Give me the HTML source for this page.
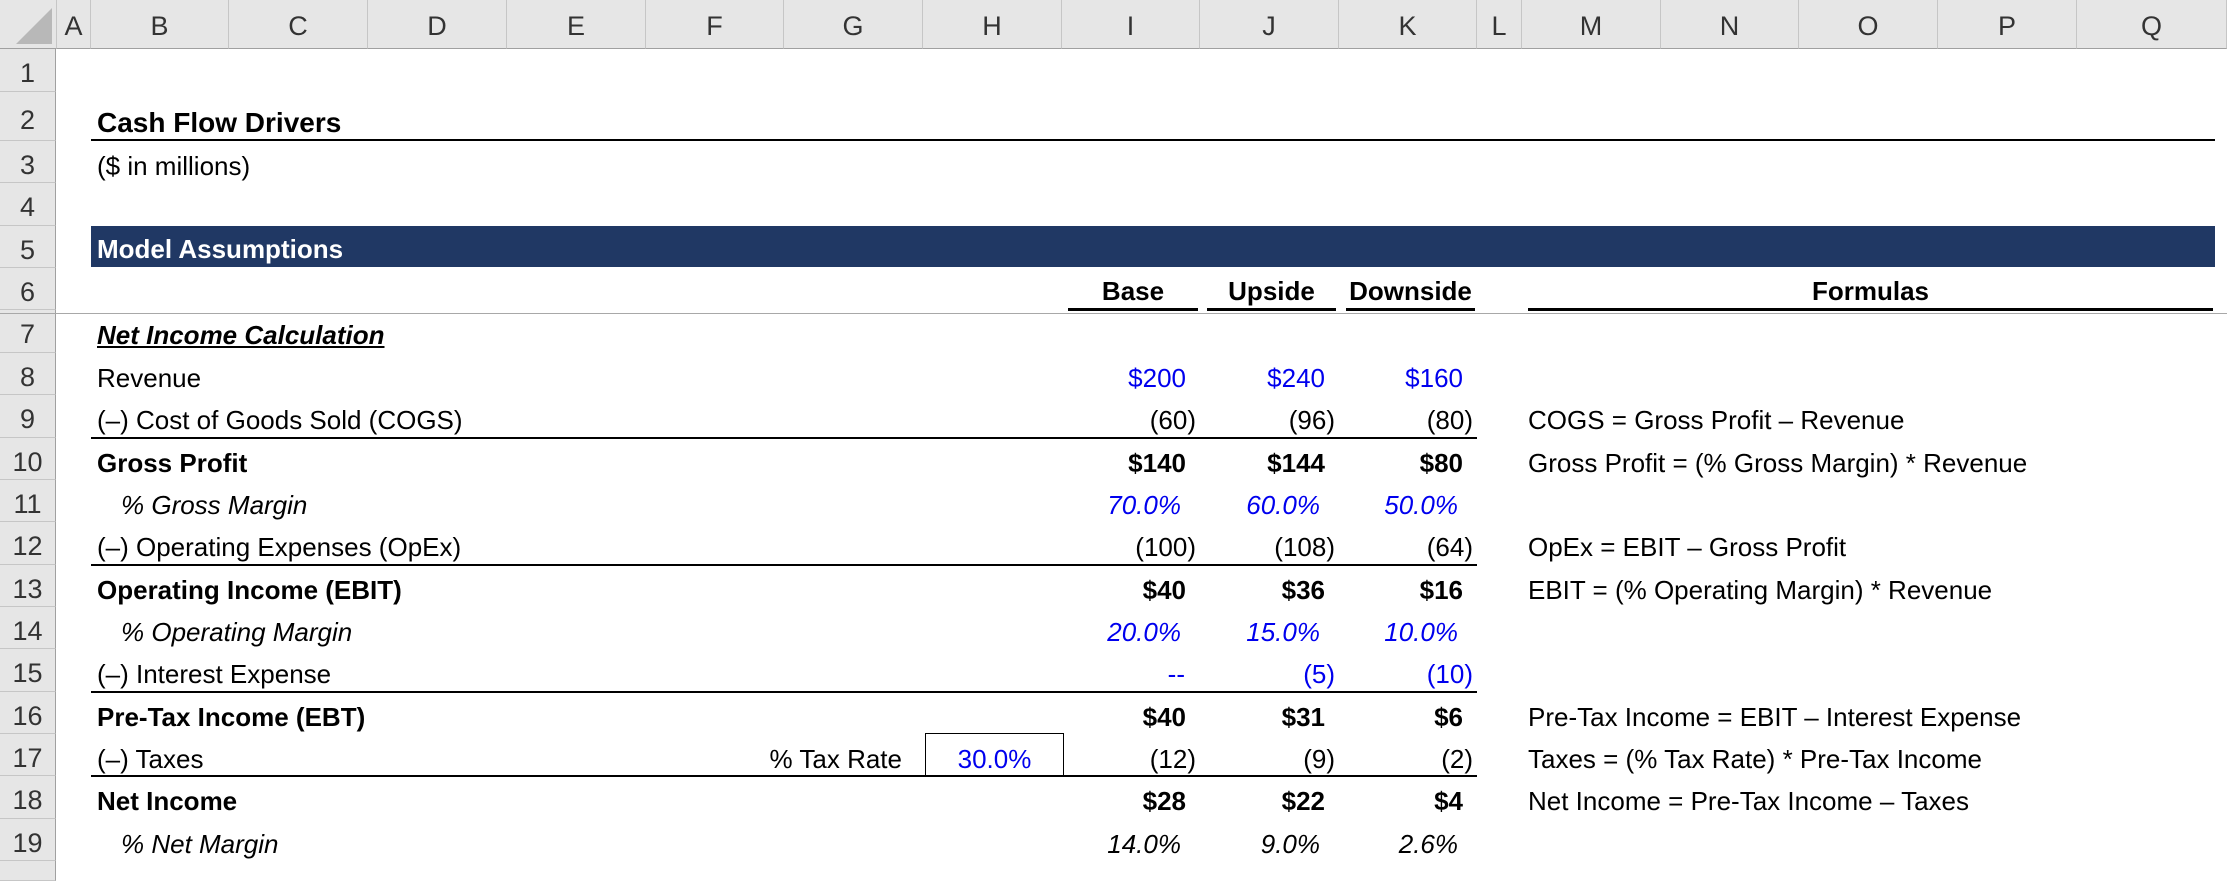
<!DOCTYPE html>
<html><head><meta charset="utf-8"><style>
*{margin:0;padding:0;box-sizing:border-box}
body{width:2227px;height:867px;background:#fff;position:relative;overflow:hidden;font-family:"Liberation Sans",sans-serif;font-size:26px;color:#000}
.a{position:absolute;white-space:nowrap;height:42px;line-height:50px}
.hd{position:absolute;top:0;height:49px;background:#e6e6e6;border-right:1px solid #c6c6c6;border-bottom:1px solid #a0a0a0;text-align:center;line-height:52px;color:#333;font-size:27px}
.rh{position:absolute;left:0;width:56px;background:#e6e6e6;border-bottom:1px solid #c6c6c6;border-right:1px solid #a0a0a0;text-align:center;color:#333;font-size:27px}
.b{font-weight:bold}.i{font-style:italic}.bl{color:#0000ee}
.r{text-align:right}.c{text-align:center}
.hl{position:absolute;height:2px;background:#000}
</style></head><body>
<!-- column headers -->
<div class="hd" style="left:0;width:57px"><svg width="57" height="49" style="position:absolute;left:0;top:0"><polygon points="52,8 52,44 16,44" fill="#b8b8b8"/></svg></div>
<div class="hd" style="left:57px;width:34px">A</div>
<div class="hd" style="left:91px;width:138px">B</div>
<div class="hd" style="left:229px;width:139px">C</div>
<div class="hd" style="left:368px;width:139px">D</div>
<div class="hd" style="left:507px;width:139px">E</div>
<div class="hd" style="left:646px;width:138px">F</div>
<div class="hd" style="left:784px;width:139px">G</div>
<div class="hd" style="left:923px;width:139px">H</div>
<div class="hd" style="left:1062px;width:138px">I</div>
<div class="hd" style="left:1200px;width:139px">J</div>
<div class="hd" style="left:1339px;width:138px">K</div>
<div class="hd" style="left:1477px;width:45px">L</div>
<div class="hd" style="left:1522px;width:139px">M</div>
<div class="hd" style="left:1661px;width:138px">N</div>
<div class="hd" style="left:1799px;width:139px">O</div>
<div class="hd" style="left:1938px;width:139px">P</div>
<div class="hd" style="left:2077px;width:150px">Q</div>
<!-- row headers -->
<div class="rh" style="top:49px;height:43px;line-height:48px">1</div>
<div class="rh" style="top:92px;height:49px;line-height:56px">2</div>
<div class="rh" style="top:141px;height:42px;line-height:48px">3</div>
<div class="rh" style="top:183px;height:43px;line-height:48px">4</div>
<div class="rh" style="top:226px;height:42px;line-height:48px">5</div>
<div class="rh" style="top:268px;height:42px;line-height:48px">6</div>
<div class="rh" style="top:310px;height:43px;line-height:48px">7</div>
<div class="rh" style="top:353px;height:42px;line-height:48px">8</div>
<div class="rh" style="top:395px;height:43px;line-height:48px">9</div>
<div class="rh" style="top:438px;height:42px;line-height:48px">10</div>
<div class="rh" style="top:480px;height:42px;line-height:48px">11</div>
<div class="rh" style="top:522px;height:43px;line-height:48px">12</div>
<div class="rh" style="top:565px;height:42px;line-height:48px">13</div>
<div class="rh" style="top:607px;height:42px;line-height:48px">14</div>
<div class="rh" style="top:649px;height:43px;line-height:48px">15</div>
<div class="rh" style="top:692px;height:42px;line-height:48px">16</div>
<div class="rh" style="top:734px;height:42px;line-height:48px">17</div>
<div class="rh" style="top:776px;height:43px;line-height:48px">18</div>
<div class="rh" style="top:819px;height:42px;line-height:48px">19</div>
<div class="rh" style="top:861px;height:20px"></div>

<!-- title -->
<div class="a b" style="left:97px;top:98px;font-size:28px">Cash Flow Drivers</div>
<div class="hl" style="left:91px;top:139px;width:2124px;height:2px"></div>
<div class="a" style="left:97px;top:141px">($ in millions)</div>
<div style="position:absolute;left:91px;top:226px;width:2124px;height:41px;background:#203864"></div>
<div class="a b" style="left:97px;top:224px;color:#fff">Model Assumptions</div>
<!-- row 6 -->
<div class="a b c" style="left:1068px;top:266px;width:130px">Base</div>
<div class="a b c" style="left:1207px;top:266px;width:129px">Upside</div>
<div class="a b c" style="left:1346px;top:266px;width:129px">Downside</div>
<div class="a b c" style="left:1528px;top:266px;width:685px">Formulas</div>
<div class="hl" style="left:1068px;top:308px;width:130px;height:3px"></div>
<div class="hl" style="left:1207px;top:308px;width:129px;height:3px"></div>
<div class="hl" style="left:1346px;top:308px;width:129px;height:3px"></div>
<div class="hl" style="left:1528px;top:308px;width:685px;height:3px"></div>
<div style="position:absolute;left:0;top:313px;width:2227px;height:1px;background:#a8a8a8"></div>

<!-- labels -->
<div class="a b i" style="left:97px;top:310px;text-decoration:underline">Net Income Calculation</div>
<div class="a" style="left:97px;top:353px">Revenue</div>
<div class="a" style="left:97px;top:395px">(–) Cost of Goods Sold (COGS)</div>
<div class="a b" style="left:97px;top:438px">Gross Profit</div>
<div class="a i" style="left:121px;top:480px">% Gross Margin</div>
<div class="a" style="left:97px;top:522px">(–) Operating Expenses (OpEx)</div>
<div class="a b" style="left:97px;top:565px">Operating Income (EBIT)</div>
<div class="a i" style="left:121px;top:607px">% Operating Margin</div>
<div class="a" style="left:97px;top:649px">(–) Interest Expense</div>
<div class="a b" style="left:97px;top:692px">Pre-Tax Income (EBT)</div>
<div class="a" style="left:97px;top:734px">(–) Taxes</div>
<div class="a r" style="left:700px;top:734px;width:202px">% Tax Rate</div>
<div style="position:absolute;left:925px;top:733px;width:139px;height:43px;border:1.5px solid #000"></div>
<div class="a c bl" style="left:925px;top:734px;width:139px">30.0%</div>
<div class="a b" style="left:97px;top:776px">Net Income</div>
<div class="a i" style="left:121px;top:819px">% Net Margin</div>

<!-- borders -->
<div class="hl" style="left:91px;top:437px;width:1386px;height:2px"></div>
<div class="hl" style="left:91px;top:564px;width:1386px;height:2px"></div>
<div class="hl" style="left:91px;top:691px;width:1386px;height:2px"></div>
<div class="hl" style="left:91px;top:775px;width:1386px;height:2px"></div>

<!-- values I (right edge 1186 / 1196) J (1325/1335) K (1463/1473) -->
<div class="a r bl" style="left:1062px;top:353px;width:124px">$200</div>
<div class="a r bl" style="left:1200px;top:353px;width:125px">$240</div>
<div class="a r bl" style="left:1339px;top:353px;width:124px">$160</div>

<div class="a r" style="left:1062px;top:395px;width:134px">(60)</div>
<div class="a r" style="left:1200px;top:395px;width:135px">(96)</div>
<div class="a r" style="left:1339px;top:395px;width:134px">(80)</div>

<div class="a r b" style="left:1062px;top:438px;width:124px">$140</div>
<div class="a r b" style="left:1200px;top:438px;width:125px">$144</div>
<div class="a r b" style="left:1339px;top:438px;width:124px">$80</div>

<div class="a r bl i" style="left:1062px;top:480px;width:119px">70.0%</div>
<div class="a r bl i" style="left:1200px;top:480px;width:120px">60.0%</div>
<div class="a r bl i" style="left:1339px;top:480px;width:119px">50.0%</div>

<div class="a r" style="left:1062px;top:522px;width:134px">(100)</div>
<div class="a r" style="left:1200px;top:522px;width:135px">(108)</div>
<div class="a r" style="left:1339px;top:522px;width:134px">(64)</div>

<div class="a r b" style="left:1062px;top:565px;width:124px">$40</div>
<div class="a r b" style="left:1200px;top:565px;width:125px">$36</div>
<div class="a r b" style="left:1339px;top:565px;width:124px">$16</div>

<div class="a r bl i" style="left:1062px;top:607px;width:119px">20.0%</div>
<div class="a r bl i" style="left:1200px;top:607px;width:120px">15.0%</div>
<div class="a r bl i" style="left:1339px;top:607px;width:119px">10.0%</div>

<div class="a r bl" style="left:1062px;top:649px;width:123px">--</div>
<div class="a r bl" style="left:1200px;top:649px;width:135px">(5)</div>
<div class="a r bl" style="left:1339px;top:649px;width:134px">(10)</div>

<div class="a r b" style="left:1062px;top:692px;width:124px">$40</div>
<div class="a r b" style="left:1200px;top:692px;width:125px">$31</div>
<div class="a r b" style="left:1339px;top:692px;width:124px">$6</div>

<div class="a r" style="left:1062px;top:734px;width:134px">(12)</div>
<div class="a r" style="left:1200px;top:734px;width:135px">(9)</div>
<div class="a r" style="left:1339px;top:734px;width:134px">(2)</div>

<div class="a r b" style="left:1062px;top:776px;width:124px">$28</div>
<div class="a r b" style="left:1200px;top:776px;width:125px">$22</div>
<div class="a r b" style="left:1339px;top:776px;width:124px">$4</div>

<div class="a r i" style="left:1062px;top:819px;width:119px">14.0%</div>
<div class="a r i" style="left:1200px;top:819px;width:120px">9.0%</div>
<div class="a r i" style="left:1339px;top:819px;width:119px">2.6%</div>

<!-- formulas -->
<div class="a" style="left:1528px;top:395px">COGS = Gross Profit – Revenue</div>
<div class="a" style="left:1528px;top:438px">Gross Profit = (% Gross Margin) * Revenue</div>
<div class="a" style="left:1528px;top:522px">OpEx = EBIT – Gross Profit</div>
<div class="a" style="left:1528px;top:565px">EBIT = (% Operating Margin) * Revenue</div>
<div class="a" style="left:1528px;top:692px">Pre-Tax Income = EBIT – Interest Expense</div>
<div class="a" style="left:1528px;top:734px">Taxes = (% Tax Rate) * Pre-Tax Income</div>
<div class="a" style="left:1528px;top:776px">Net Income = Pre-Tax Income – Taxes</div>
</body></html>
